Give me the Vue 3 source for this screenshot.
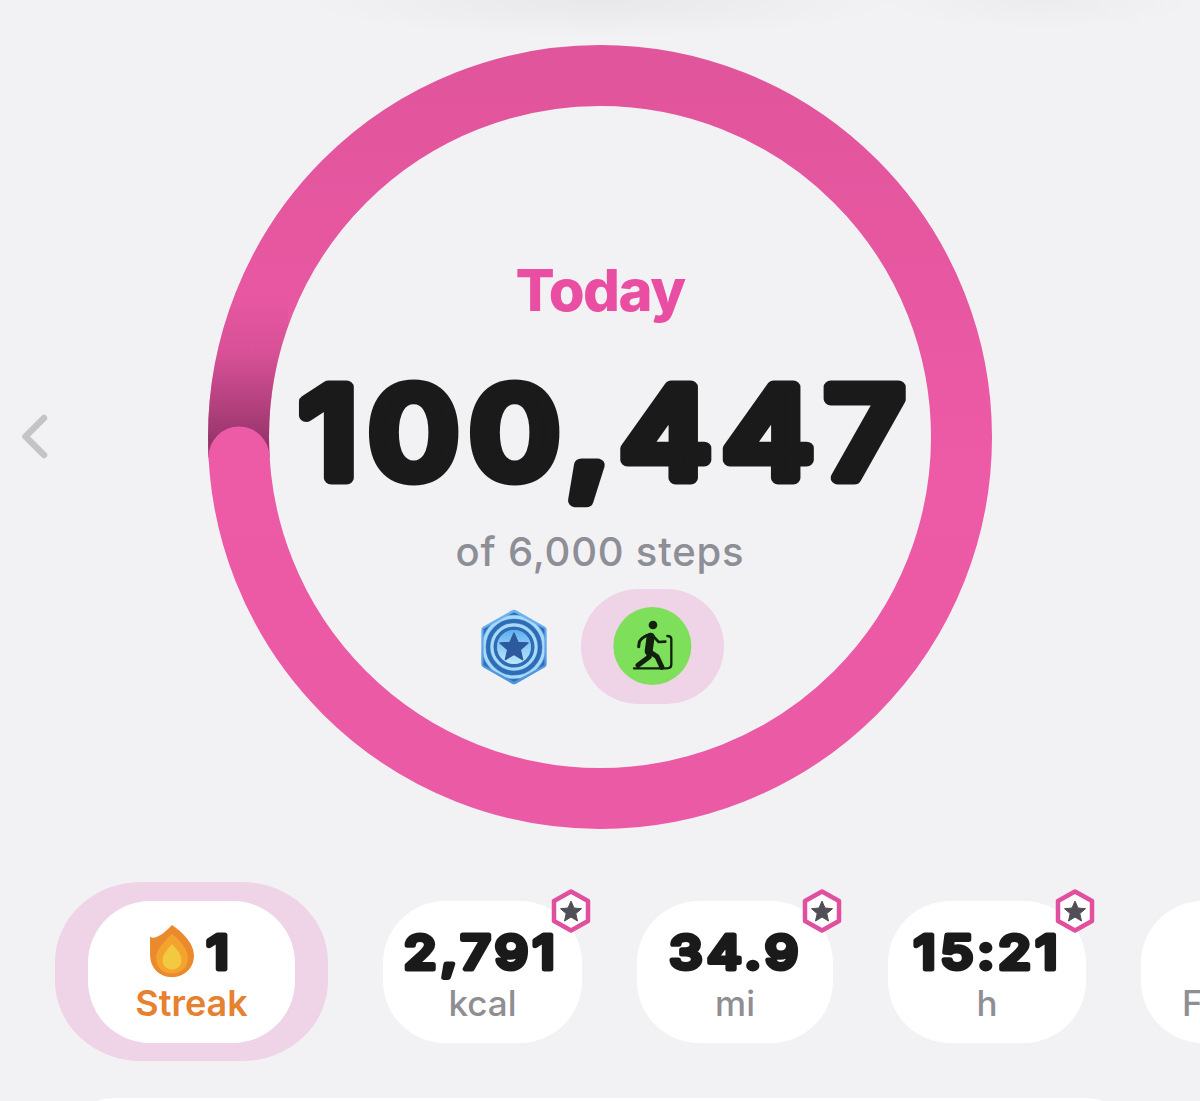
<!-- Daily steps screen: progress ring, today's count, and the metric pills below. -->
<template>
  <div class="page">
    <section class="hero">
      <div class="nav-cell">
        <svg class="chevron" width="30" height="48" viewBox="0 0 30 48">
          <path d="M24 5 L5.500 23.500 L24 42" />
        </svg>
      </div>

      <div class="ring-cell">
        <svg class="ring" width="784" height="784" viewBox="0 0 784 784">
          <defs>
            <linearGradient id="ringFill" x1="0" y1="0" x2="0" y2="1">
              <stop offset="0" stop-color="#e1559c" />
              <stop offset="0.55" stop-color="#ed5aa6" />
              <stop offset="1" stop-color="#ea5aa5" />
            </linearGradient>
            <linearGradient id="tailShade" gradientUnits="userSpaceOnUse" x1="0" y1="250" x2="0" y2="400">
              <stop offset="0" stop-color="#8a2f62" stop-opacity="0" />
              <stop offset="0.4" stop-color="#8a2f62" stop-opacity="0.2" />
              <stop offset="1" stop-color="#8a2f62" stop-opacity="0.88" />
            </linearGradient>
            <clipPath id="tailClip">
              <rect x="0" y="250" width="80" height="162" />
            </clipPath>
          </defs>
          <circle cx="392" cy="392" r="361.500" fill="none" stroke="url(#ringFill)" stroke-width="61" />
          <circle
            cx="392"
            cy="392"
            r="361.500"
            fill="none"
            stroke="url(#tailShade)"
            stroke-width="61"
            clip-path="url(#tailClip)"
          />
          <circle cx="31" cy="412" r="30.500" fill="#ed5aa6" />
        </svg>

        <div class="ring-content">
          <div class="today">Today</div>
          <svg class="count" width="640" height="160" viewBox="0 0 640 160">
            <text transform="translate(327.600 123) scale(1.12 1)" text-anchor="middle">100,447</text>
          </svg>
          <div class="goal">of 6,000 steps</div>
          <div class="awards">
            <svg width="80" height="84" viewBox="0 0 240 252">
              <defs>
                <linearGradient id="medalBody" x1="0" y1="0" x2="0" y2="1">
                  <stop offset="0" stop-color="#6fb4ee" />
                  <stop offset="1" stop-color="#4f93dc" />
                </linearGradient>
                <linearGradient id="medalCore" x1="0" y1="0" x2="0" y2="1">
                  <stop offset="0" stop-color="#5fb0ee" />
                  <stop offset="1" stop-color="#bfe8fc" />
                </linearGradient>
                <clipPath id="medalHex">
                  <path d="M120 22 L212 72 V180 L120 230 L28 180 V72 Z" />
                </clipPath>
              </defs>
              <path
                d="M120 24 L208 74 V178 L120 228 L32 178 V74 Z"
                fill="url(#medalBody)"
                stroke="url(#medalBody)"
                stroke-width="20"
                stroke-linejoin="round"
              />
              <g clip-path="url(#medalHex)" fill="none">
                <circle cx="120" cy="126" r="104" stroke="#2f6cb4" stroke-width="14" />
                <circle cx="120" cy="126" r="90" stroke="#a9dbf8" stroke-width="9" />
                <circle cx="120" cy="126" r="78" stroke="#2f6cb4" stroke-width="12" />
                <circle cx="120" cy="126" r="66" stroke="#a9dbf8" stroke-width="9" />
                <circle cx="120" cy="126" r="56" stroke="#2f6cb4" stroke-width="10" />
              </g>
              <circle cx="120" cy="126" r="51" fill="url(#medalCore)" />
              <path
                d="M120 84 L132 112 L162 114 L139 134 L146 164 L120 148 L94 164 L101 134 L78 114 L108 112 Z"
                fill="#2d5a9e"
                stroke="#2d5a9e"
                stroke-width="4"
                stroke-linejoin="round"
              />
            </svg>

            <div class="activity-halo">
              <svg width="82" height="82" viewBox="0 0 246 246">
                <circle cx="121" cy="120" r="117" fill="#7ee05a" />
                <g fill="none" stroke="#12210f" stroke-linecap="round" stroke-linejoin="round">
                  <path d="M116 92 L110 135" stroke-width="24" />
                  <path d="M105 88 Q88 95 82 108 L80 122" stroke-width="9" />
                  <path d="M125 92 L140 108 L160 107" stroke-width="8" />
                  <path d="M108 138 L112 152 L78 178" stroke-width="15" />
                  <path d="M110 135 L135 152 L150 184" stroke-width="15" />
                  <path d="M66 187 H165 Q178 187 178 175 V100 Q178 90 166 90" stroke-width="7" />
                </g>
                <circle cx="123" cy="57" r="13" fill="#12210f" />
              </svg>
            </div>
          </div>
        </div>
      </div>
      <div></div>
    </section>

    <section class="metrics">
      <div class="streak-halo">
        <div class="pill streak">
          <div class="streak-value">
            <svg width="44" height="52" viewBox="330 168 130 154">
              <path
                d="M395 168 C410 178 460 215 460 258 C460 295 432 322 395 322 C358 322 330 295 330 255 L330 203 C338 208 345 205 352 202 C370 195 385 178 395 168 Z"
                fill="#ea8a2c"
              />
              <path
                d="M395 195 C420 215 442 240 442 265 C442 295 420 312 395 312 C370 312 348 295 348 265 C348 240 375 215 395 195 Z"
                fill="#f3a42f"
              />
              <path
                d="M395 225 C410 240 423 255 423 272 C423 290 410 300 395 300 C380 300 367 290 367 272 C367 255 382 240 395 225 Z"
                fill="#f4c942"
              />
            </svg>
            <svg class="value" width="28" height="52" viewBox="0 0 28 52">
              <text transform="translate(14 44) scale(1.15 1)" text-anchor="middle">1</text>
            </svg>
          </div>
          <div class="label streak-label">Streak</div>
        </div>
      </div>

      <div v-for="m in metrics" :key="m.label" class="pill" :style="{ width: m.width + 'px' }">
        <svg class="value" :width="m.width" height="52" :viewBox="`0 0 ${m.width} 52`">
          <text :transform="`translate(${m.width / 2 + m.shift} 44) scale(1.13 1)`" text-anchor="middle">{{ m.value }}</text>
        </svg>
        <div class="label">{{ m.label }}</div>
        <svg v-if="m.star" class="star-badge" width="42" height="44" viewBox="0 0 42 44">
          <path
            d="M21 2.500 L38 12 V32 L21 41.500 L4 32 V12 Z"
            fill="#fff"
            stroke="#e0509f"
            stroke-width="4.500"
            stroke-linejoin="round"
          />
          <path
            d="M21 12 L24 19 L31.500 19.700 L25.800 24.600 L27.500 32 L21 28.100 L14.500 32 L16.200 24.600 L10.500 19.700 L18 19 Z"
            fill="#4f4f55"
            stroke="#4f4f55"
            stroke-width="1"
            stroke-linejoin="round"
          />
        </svg>
      </div>
    </section>

    <div class="next-card"></div>
  </div>
</template>

<script setup>
const metrics = [
  { value: "2,791", label: "kcal", width: 199, star: true, shift: -1 },
  { value: "34.9", label: "mi", width: 196, star: true, shift: 1 },
  { value: "15:21", label: "h", width: 198, star: true, shift: 1 },
  { value: "", label: "Floors", width: 186, star: false, shift: 0 },
];
</script>

<style scoped>
.page {
  width: 1200px;
  height: 1101px;
  overflow: hidden;
  font-family: Inter, "Liberation Sans", sans-serif;
  background:
    radial-gradient(ellipse 300px 38px at 600px 0, #e8e8eb, transparent),
    radial-gradient(ellipse 160px 30px at 1040px 0, #ececef, transparent),
    #f2f2f4;
}
.hero {
  display: grid;
  grid-template-columns: 208px 784px 208px;
  padding-top: 45px;
}
.nav-cell {
  display: flex;
  align-items: center;
  padding-left: 20px;
}
.chevron path {
  fill: none;
  stroke: #c4c4c8;
  stroke-width: 6.500;
  stroke-linecap: round;
  stroke-linejoin: round;
}
.ring-cell {
  display: grid;
  width: 784px;
  height: 784px;
}
.ring,
.ring-content {
  grid-area: 1 / 1;
}
.ring-content {
  display: flex;
  flex-direction: column;
  align-items: center;
  padding-top: 210px;
}
.today {
  font-size: 58px;
  line-height: 70px;
  font-weight: 800;
  letter-spacing: -1.500px;
  color: #ea4ea2;
}
.count {
  display: block;
  margin-top: 30px;
  overflow: visible;
}
.count text {
  font-size: 125px;
  font-weight: 500;
  letter-spacing: 9.500px;
  fill: #1a1a1b;
  stroke: #1a1a1b;
  stroke-width: 13px;
  stroke-linejoin: round;
  stroke-linecap: round;
}
.goal {
  margin-top: 14px;
  font-size: 40px;
  line-height: 46px;
  font-weight: 500;
  letter-spacing: 0.800px;
  color: #8e8e96;
}
.awards {
  display: flex;
  align-items: center;
  gap: 27px;
  margin-top: 14px;
  margin-left: -2px;
}
.activity-halo {
  display: flex;
  align-items: center;
  justify-content: center;
  width: 143px;
  height: 115px;
  border-radius: 58px;
  background: #efd3e6;
}
.metrics {
  display: flex;
  align-items: center;
  gap: 55px;
  margin-top: 53px;
  padding-left: 55px;
}
.streak-halo {
  flex: none;
  padding: 19px 33px 18px;
  border-radius: 86px / 80px;
  background: #efd3e6;
}
.pill {
  position: relative;
  flex: none;
  box-sizing: border-box;
  height: 142px;
  padding-top: 24px;
  border-radius: 62px;
  background: #fff;
  text-align: center;
}
.streak {
  width: 207px;
}
.streak-value {
  display: flex;
  align-items: center;
  justify-content: center;
  gap: 12px;
  height: 52px;
}
.value {
  display: block;
  overflow: visible;
}
.value text {
  font-size: 47px;
  font-weight: 500;
  letter-spacing: 4px;
  fill: #1a1a1b;
  stroke: #1a1a1b;
  stroke-width: 5px;
  stroke-linejoin: round;
}
.label {
  margin-top: 4px;
  font-size: 35px;
  line-height: 44px;
  font-weight: 500;
  color: #8e8e93;
  white-space: nowrap;
}
.streak-label {
  font-size: 36px;
  font-weight: 600;
  color: #e6812f;
}
.star-badge {
  position: absolute;
  top: -12px;
  right: -10px;
}
.next-card {
  height: 60px;
  margin: 37px 55px 0;
  border-radius: 60px 60px 0 0;
  background: #fff;
}
</style>

<style>
body {
  margin: 0;
  background: #f2f2f4;
}
</style>
